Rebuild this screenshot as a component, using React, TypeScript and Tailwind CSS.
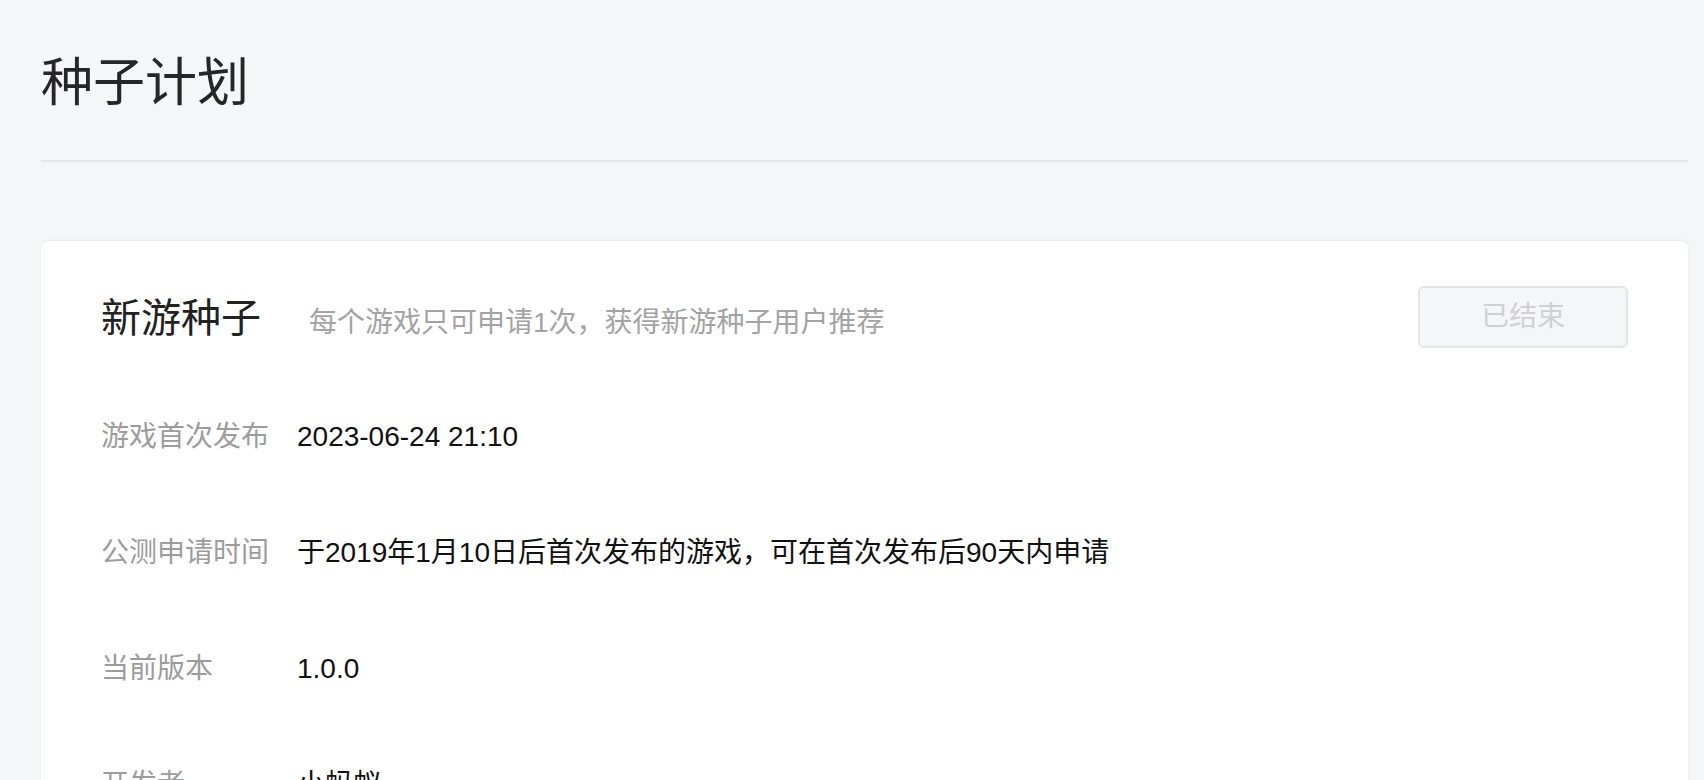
const font = { fontFamily: '"Liberation Sans", "Noto Sans CJK SC", sans-serif' };

interface InfoRow {
  label: string;
  value: string;
}

const rows: InfoRow[] = [
  { label: "游戏首次发布", value: "2023-06-24 21:10" },
  { label: "公测申请时间", value: "于2019年1月10日后首次发布的游戏，可在首次发布后90天内申请" },
  { label: "当前版本", value: "1.0.0" },
  { label: "开发者", value: "小蚂蚁" },
];

export default function App() {
  return (
    <div
      className="min-h-screen bg-[#f4f7f8] pl-[41px] pr-[16px] pb-10"
      style={font}
    >
      {/* Page header */}
      <div className="pt-[47px] pb-[41px] border-b-2 border-[#e4e7ea]">
        <h1 className="text-[52px] leading-[72px] text-[#262626] font-normal">
          种子计划
        </h1>
      </div>

      {/* Card */}
      <div className="mt-[79px] bg-white rounded-lg shadow-[0_-1px_3px_rgba(0,0,0,0.05)] px-[60px] pt-[45px] pb-[60px]">
        <div className="flex items-center justify-between h-[62px]">
          <div className="flex items-baseline pt-[2px]">
            <h2 className="text-[40px] leading-[56px] text-[#222] font-normal">
              新游种子
            </h2>
            <span className="ml-[48px] text-[28px] text-[#a3a3a3]">
              每个游戏只可申请1次，获得新游种子用户推荐
            </span>
          </div>
          <button
            disabled
            className="w-[210px] h-[62px] rounded-md border-2 border-[#e3e5e8] bg-[#f5f6f7] text-[28px] text-[#cfd1d3]"
          >
            已结束
          </button>
        </div>

        <div className="mt-[69px] flex flex-col gap-[76px]">
          {rows.map((row) => (
            <div key={row.label} className="flex items-center h-[40px]">
              <span className="w-[196px] shrink-0 text-[28px] text-[#9c9c9c]">
                {row.label}
              </span>
              <span className="text-[28px] text-[#111]">{row.value}</span>
            </div>
          ))}
        </div>
      </div>
    </div>
  );
}
